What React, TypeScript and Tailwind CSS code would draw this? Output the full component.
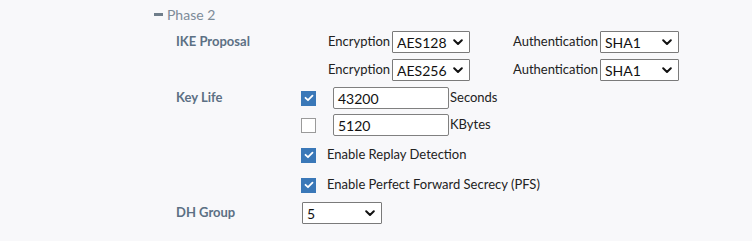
import React from "react";

const Chevron = () => (
  <svg width="10" height="7" viewBox="0 0 10 7" className="shrink-0">
    <path d="M1.2 1.3 L5 5 L8.8 1.3" fill="none" stroke="#111" strokeWidth="2" strokeLinecap="round" strokeLinejoin="round" />
  </svg>
);

const FakeSelect = ({ value, w }: { value: string; w: string }) => (
  <div className={`${w} h-[22px] bg-white border border-[#7a7a7a] rounded-[1px] flex items-center justify-between pl-[4px] pr-[6px] text-[14px] text-[#111]`}>
    <span>{value}</span>
    <Chevron />
  </div>
);

const Check = ({ checked }: { checked: boolean }) =>
  checked ? (
    <div className="w-[15px] h-[15px] bg-[#3a78b8] flex items-center justify-center shrink-0">
      <svg width="10" height="8" viewBox="0 0 10 8">
        <path d="M1.5 3.8 L4 6.2 L8.5 1.6" fill="none" stroke="#fff" strokeWidth="1.8" strokeLinecap="round" strokeLinejoin="round" />
      </svg>
    </div>
  ) : (
    <div className="w-[15px] h-[15px] bg-white border border-[#9a9a9a] shrink-0" />
  );

const Label = ({ children }: { children: React.ReactNode }) => (
  <div className="w-[125px] shrink-0 text-[13px] font-bold text-[#5c7084]">{children}</div>
);

export default function App() {
  return (
    <div
      className="w-[752px] h-[241px] bg-[#f8f8fa] overflow-hidden"
      style={{ fontFamily: "Lato, 'Open Sans', sans-serif" }}
    >
      <div className="h-[28px] flex items-center pl-[154px] text-[14px] text-[#7d8b98]">
        <div className="w-[9px] h-[3px] bg-[#6f7d8a] mr-[4px]" />
        <span>Phase 2</span>
      </div>
      <div className="pl-[176px] flex flex-col">
        <div className="mt-[3px] h-[22px] flex items-center">
          <Label>IKE Proposal</Label>
          <div className="ml-[27px] w-[64px] text-[13px] text-[#222]">Encryption</div>
          <FakeSelect value="AES128" w="w-[78px]" />
          <div className="ml-[43px] w-[87px] text-[13px] text-[#222]">Authentication</div>
          <FakeSelect value="SHA1" w="w-[79px]" />
        </div>
        <div className="mt-[6px] h-[22px] flex items-center">
          <Label>{""}</Label>
          <div className="ml-[27px] w-[64px] text-[13px] text-[#222]">Encryption</div>
          <FakeSelect value="AES256" w="w-[78px]" />
          <div className="ml-[43px] w-[87px] text-[13px] text-[#222]">Authentication</div>
          <FakeSelect value="SHA1" w="w-[79px]" />
        </div>
        <div className="mt-[6px] h-[22px] flex items-center">
          <Label>Key Life</Label>
          <Check checked />
          <div className="ml-[17px] w-[116px] h-[22px] bg-white border border-[#808080] rounded-[2px] flex items-center pl-[4px] text-[14px] text-[#111]">
            43200
          </div>
          <span className="ml-[1px] text-[13px] text-[#222]">Seconds</span>
        </div>
        <div className="mt-[5px] h-[22px] flex items-center">
          <Label>{""}</Label>
          <Check checked={false} />
          <div className="ml-[17px] w-[116px] h-[22px] bg-white border border-[#808080] rounded-[2px] flex items-center pl-[4px] text-[14px] text-[#111]">
            5120
          </div>
          <span className="ml-[1px] text-[13px] text-[#222]">KBytes</span>
        </div>
        <div className="mt-[8px] h-[22px] flex items-center">
          <Label>{""}</Label>
          <Check checked />
          <span className="ml-[11px] text-[13px] text-[#222]">Enable Replay Detection</span>
        </div>
        <div className="mt-[8px] h-[22px] flex items-center">
          <Label>{""}</Label>
          <Check checked />
          <span className="ml-[11px] text-[13px] text-[#222]">Enable Perfect Forward Secrecy (PFS)</span>
        </div>
        <div className="mt-[6px] h-[22px] flex items-center">
          <Label>DH Group</Label>
          <div className="ml-[1px]">
            <FakeSelect value="5" w="w-[80px]" />
          </div>
        </div>
      </div>
    </div>
  );
}
